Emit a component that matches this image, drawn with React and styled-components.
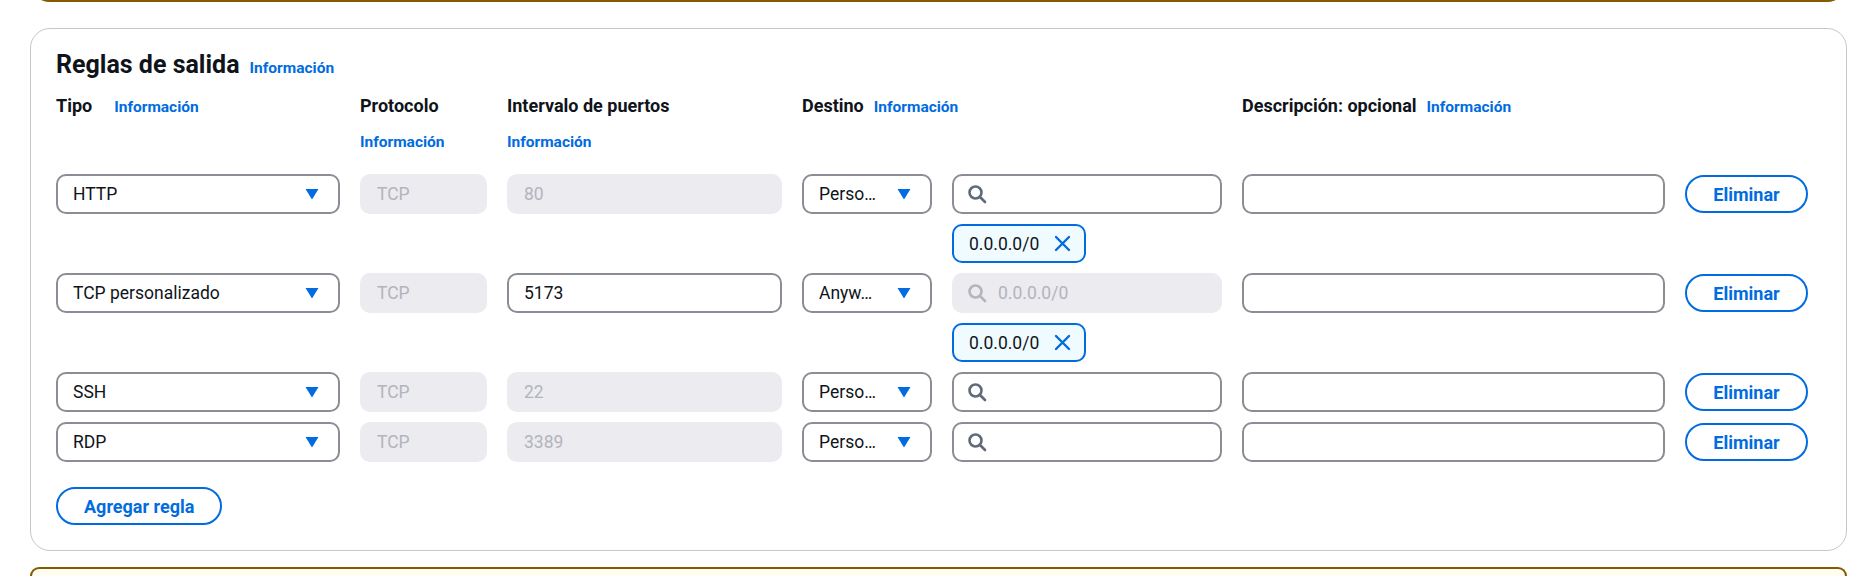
import React from 'react';
import styled, { createGlobalStyle } from 'styled-components';

const GlobalStyle = createGlobalStyle`
  html, body { margin: 0; padding: 0; background: #ffffff; }
  body {
    font-family: Roboto, "Liberation Sans", Arial, sans-serif;
    color: #0f141a;
    overflow: hidden;
  }
  * { box-sizing: border-box; }
`;

const BLUE = '#006ce0';
const COLS = '284px 127px 275px 130px 270px 423px 123px';

const Page = styled.div`
  padding: 0 10px 0 30px;
`;

const TopBanner = styled.div`
  margin-top: -20px;
  height: 22px;
  border: 2px solid #855900;
  border-top: none;
  border-radius: 0 0 20px 20px;
  background: #fffef0;
`;

const BottomBanner = styled.div`
  margin-top: 16px;
  height: 9px;
  border: 2px solid #855900;
  border-bottom: none;
  border-radius: 20px 20px 0 0;
  background: #fffef0;
`;

const Card = styled.section`
  margin-top: 26px;
  border: 1px solid #c6c6cd;
  border-radius: 20px;
  padding: 21px 26px 25px 25px;
  background: #fff;
`;

const TitleRow = styled.div`
  display: flex;
  align-items: baseline;
  gap: 10px;
`;

const Title = styled.h2`
  margin: 0;
  font-size: 25px;
  line-height: 30px;
  font-weight: 700;
  color: #0f141a;
`;

const InfoLink = styled.a`
  color: ${BLUE};
  font-size: 15.5px;
  font-weight: 700;
  line-height: 20px;
  text-decoration: none;
  cursor: pointer;
  display: ${p => (p.$block ? 'block' : 'inline')};
  margin-top: ${p => (p.$block ? '13px' : '0')};
`;

const Columns = styled.div`
  display: grid;
  grid-template-columns: ${COLS};
  column-gap: 20px;
  row-gap: 10px;
  align-items: center;
`;

const HeaderGrid = styled(Columns)`
  margin-top: 12px;
  margin-bottom: 22px;
  align-items: start;
`;

const HeadCell = styled.div`
  display: flex;
  flex-direction: ${p => (p.$stacked ? 'column' : 'row')};
  align-items: ${p => (p.$stacked ? 'flex-start' : 'baseline')};
  gap: ${p => (p.$stacked ? '0' : `${p.$gap || 10}px`)};
  grid-column: span ${p => p.$span || 1};
`;

const Label = styled.span`
  font-size: 18px;
  font-weight: 700;
  line-height: 27px;
  color: #0f141a;
`;

const Rules = styled.div`
  display: flex;
  flex-direction: column;
  gap: 10px;
`;

const Field = styled.div`
  height: 40px;
  border: 2px solid ${p => (p.$disabled ? '#ebebf0' : '#8c8c94')};
  background: ${p => (p.$disabled ? '#ebebf0' : '#ffffff')};
  border-radius: 10px;
  display: flex;
  align-items: center;
  padding: 0 ${p => (p.$padR != null ? p.$padR : 15)}px 0 ${p => (p.$padL != null ? p.$padL : 15)}px;
  font-size: 17.5px;
  color: ${p => (p.$disabled ? '#b4b4bb' : '#0f141a')};
  gap: ${p => p.$gap || 0}px;
  min-width: 0;
`;

const FieldText = styled.span`
  flex: 1;
  white-space: nowrap;
  overflow: hidden;
  color: ${p => (p.$placeholder ? '#b4b4bb' : 'inherit')};
`;

const Token = styled.div`
  grid-column: 5;
  justify-self: start;
  height: 39px;
  display: inline-flex;
  align-items: center;
  gap: 15px;
  padding: 0 13px 0 15px;
  border: 2px solid ${BLUE};
  background: #f0fbff;
  border-radius: 10px;
  font-size: 17.5px;
  color: #0f141a;
`;

const Button = styled.button`
  height: 38px;
  padding: 0 26px;
  border: 2px solid ${BLUE};
  border-radius: 20px;
  background: #ffffff;
  color: ${BLUE};
  font-family: Roboto, "Liberation Sans", Arial, sans-serif;
  font-size: 18px;
  font-weight: 700;
  cursor: pointer;
  justify-self: ${p => (p.$stretch ? 'stretch' : 'start')};
  margin-top: ${p => p.$mt || 0}px;
`;

const Caret = () => (
  <svg width="14" height="12" viewBox="0 0 14 12" aria-hidden="true">
    <path d="M0.5 1h13L7 11.5z" fill={BLUE} />
  </svg>
);

const SearchIcon = ({ color }) => (
  <svg width="20" height="20" viewBox="0 0 20 20" aria-hidden="true" fill="none">
    <circle cx="8.5" cy="8.5" r="6" stroke={color} strokeWidth="2.6" />
    <path d="M13 13l5 5" stroke={color} strokeWidth="2.6" strokeLinecap="round" />
  </svg>
);

const CloseIcon = () => (
  <svg width="17" height="17" viewBox="0 0 17 17" aria-hidden="true" fill="none">
    <path d="M2 2l13 13M15 2L2 15" stroke={BLUE} strokeWidth="2.4" strokeLinecap="round" />
  </svg>
);

const Select = ({ text }) => (
  <Field $padR={19} $gap={8}>
    <FieldText>{text}</FieldText>
    <Caret />
  </Field>
);

const SearchField = ({ disabled, placeholder }) => (
  <Field $disabled={disabled} $padL={13} $gap={11}>
    <SearchIcon color={disabled ? '#b4b4bb' : '#5f6b7a'} />
    <FieldText $placeholder>{placeholder}</FieldText>
  </Field>
);

const rules = [
  { type: 'HTTP', port: '80', portEditable: false, dest: 'Perso…', searchDisabled: false, token: true },
  { type: 'TCP personalizado', port: '5173', portEditable: true, dest: 'Anyw…', searchDisabled: true, token: true },
  { type: 'SSH', port: '22', portEditable: false, dest: 'Perso…', searchDisabled: false, token: false },
  { type: 'RDP', port: '3389', portEditable: false, dest: 'Perso…', searchDisabled: false, token: false },
];

export default function App() {
  return (
    <Page>
      <GlobalStyle />
      <TopBanner />
      <Card>
        <TitleRow>
          <Title>Reglas de salida</Title>
          <InfoLink>Información</InfoLink>
        </TitleRow>
        <HeaderGrid>
          <HeadCell $gap={22}>
            <Label>Tipo</Label>
            <InfoLink>Información</InfoLink>
          </HeadCell>
          <HeadCell $stacked>
            <Label>Protocolo</Label>
            <InfoLink $block>Información</InfoLink>
          </HeadCell>
          <HeadCell $stacked>
            <Label>Intervalo de puertos</Label>
            <InfoLink $block>Información</InfoLink>
          </HeadCell>
          <HeadCell $span={2}>
            <Label>Destino</Label>
            <InfoLink>Información</InfoLink>
          </HeadCell>
          <HeadCell>
            <Label>Descripción: opcional</Label>
            <InfoLink>Información</InfoLink>
          </HeadCell>
          <div />
        </HeaderGrid>
        <Rules>
          {rules.map((r, i) => (
            <Columns key={i}>
              <Select text={r.type} />
              <Field $disabled>
                <FieldText>TCP</FieldText>
              </Field>
              <Field $disabled={!r.portEditable}>
                <FieldText>{r.port}</FieldText>
              </Field>
              <Select text={r.dest} />
              <SearchField
                disabled={r.searchDisabled}
                placeholder={r.searchDisabled ? '0.0.0.0/0' : ''}
              />
              <Field />
              <Button $stretch>Eliminar</Button>
              {r.token && (
                <Token>
                  <span>0.0.0.0/0</span>
                  <CloseIcon />
                </Token>
              )}
            </Columns>
          ))}
        </Rules>
        <Button $mt={25}>Agregar regla</Button>
      </Card>
      <BottomBanner />
    </Page>
  );
}
